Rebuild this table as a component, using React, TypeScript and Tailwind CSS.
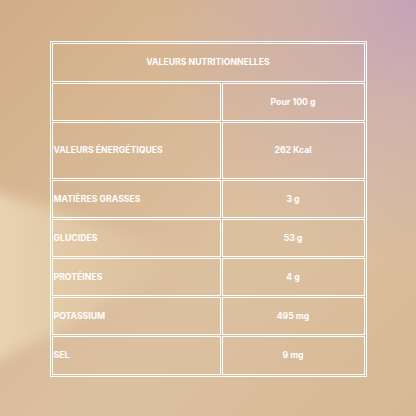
import React from 'react';

const rows = [
  { label: 'VALEURS ÉNERGÉTIQUES', value: '262 Kcal', h: 'h-[57px]' },
  { label: 'MATIÈRES GRASSES', value: '3 g', h: 'h-[38px]' },
  { label: 'GLUCIDES', value: '53 g', h: 'h-[38px]' },
  { label: 'PROTÉINES', value: '4 g', h: 'h-[38px]' },
  { label: 'POTASSIUM', value: '495 mg', h: 'h-[38px]' },
  { label: 'SEL', value: '9 mg', h: 'h-[39px]' },
];

export default function App() {
  return (
    <div className="relative w-[416px] h-[416px] overflow-hidden bg-[linear-gradient(135deg,#d2ad87_0%,#d9bc9b_45%,#dcc1a1_60%,#d6b995_100%)] font-['Inter','Liberation_Sans',sans-serif]">
      {/* background glow + light wedge */}
      <div className="absolute inset-0 bg-[radial-gradient(circle_at_100%_0%,#c4a3b8_0%,rgba(200,168,180,0.6)_18%,rgba(210,180,170,0)_45%)]" />
      <svg className="absolute inset-0" width="416" height="416" viewBox="0 0 416 416">
        <defs>
          <filter id="blur" x="-50%" y="-50%" width="200%" height="200%">
            <feGaussianBlur stdDeviation="7" />
          </filter>
          <linearGradient id="wedge" x1="0" y1="0" x2="1" y2="0">
            <stop offset="0" stopColor="#ebd6b4" stopOpacity="1" />
            <stop offset="0.35" stopColor="#e6cfac" stopOpacity="0.8" />
            <stop offset="1" stopColor="#e2c9a6" stopOpacity="0" />
          </linearGradient>
        </defs>
        <polygon points="-20,188 50,208 200,258 70,325 -20,368" fill="url(#wedge)" filter="url(#blur)" />
      </svg>

      <div className="relative flex justify-center pt-[41px]">
        <table className="border-separate border-spacing-[1px] border border-white text-white text-[8.7px] font-bold leading-none">
          <tbody>
            <tr className="h-[39px]">
              <td colSpan={2} className="border border-white text-center p-0">
                VALEURS NUTRITIONNELLES
              </td>
            </tr>
            <tr className="h-[38px]">
              <td className="w-[169px] border border-white p-0" />
              <td className="w-[143px] border border-white text-center p-0">Pour 100 g</td>
            </tr>
            {rows.map((r) => (
              <tr key={r.label} className={r.h}>
                <td className="w-[169px] border border-white p-0 pl-px text-left">{r.label}</td>
                <td className="w-[143px] border border-white p-0 text-center">{r.value}</td>
              </tr>
            ))}
          </tbody>
        </table>
      </div>
    </div>
  );
}
